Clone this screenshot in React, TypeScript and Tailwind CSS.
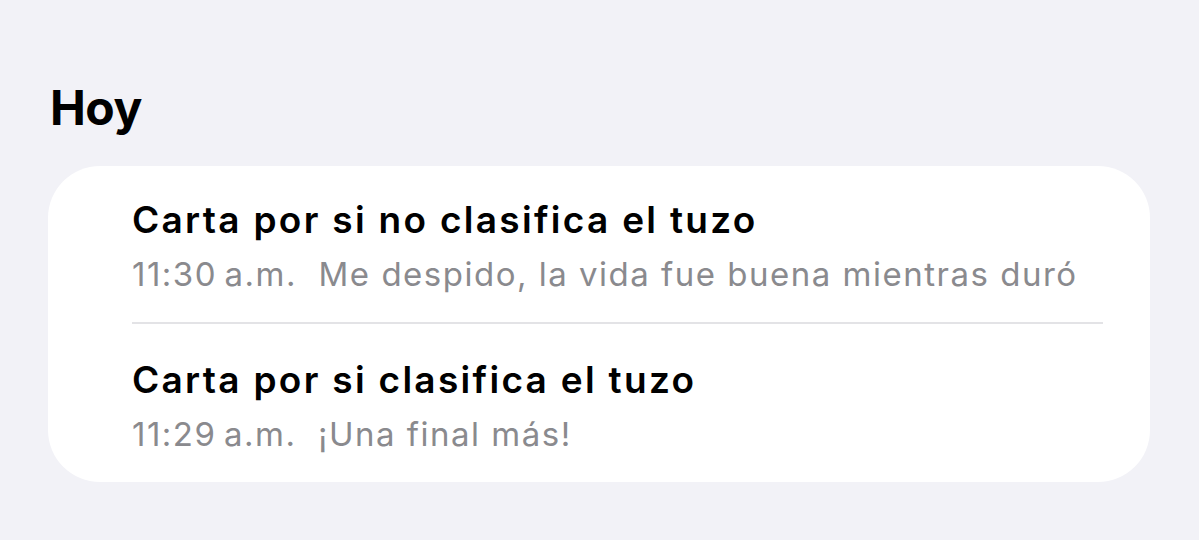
import React from "react";

const font = { fontFamily: "Inter, 'Noto Sans', sans-serif" };

function Row({
  title,
  time,
  text,
  divider,
  top,
}: {
  title: string;
  time: string;
  text: string;
  divider?: boolean;
  top: string;
}) {
  return (
    <div className="pl-[84px] pr-[47px]">
      <div className={divider ? "border-b-2 border-[#e3e3e6]" : ""}>
        <div className={top + " pb-[28px]"}>
          <div className="text-[37px] leading-[44px] font-semibold text-black tracking-[2.3px]">{title}</div>
          <div className="mt-[12px] text-[33px] leading-[40px] text-[#8a8a8e] tracking-[1.5px] whitespace-pre">
            {time + "\u202Fa.m.  " + text}
          </div>
        </div>
      </div>
    </div>
  );
}

export default function App() {
  return (
    <div className="w-[1199px] h-[540px] bg-[#f2f2f7] px-[48px] pt-[80px]" style={font}>
      <div className="pl-[2px] text-[48px] leading-[56px] font-bold text-black tracking-[-0.5px]">Hoy</div>
      <div className="mt-[30px] w-[1102px] bg-white rounded-[52px]">
        <Row top="pt-[32px]" title="Carta por si no clasifica el tuzo" time="11:30" text="Me despido, la vida fue buena mientras duró" divider />
        <Row top="pt-[34px]" title="Carta por si clasifica el tuzo" time="11:29" text="¡Una final más!" />
      </div>
    </div>
  );
}
